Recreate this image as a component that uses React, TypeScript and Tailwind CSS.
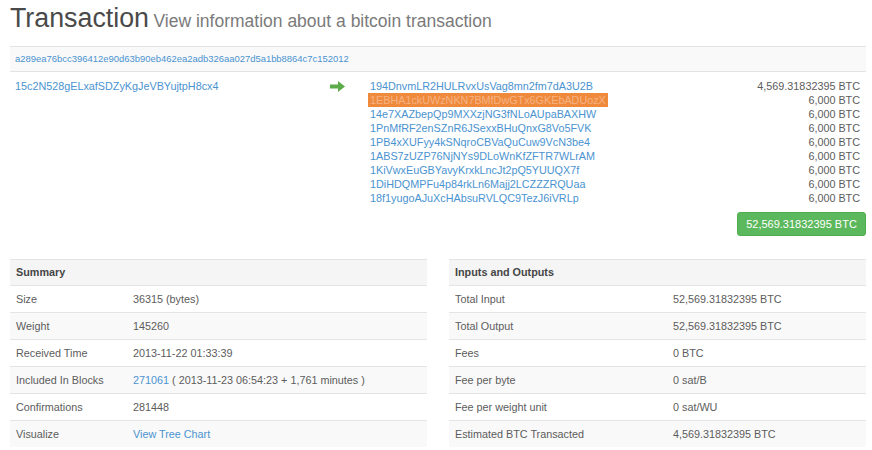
import React from "react";

const outputs: [string, string][] = [
  ["194DnvmLR2HULRvxUsVag8mn2fm7dA3U2B", "4,569.31832395 BTC"],
  ["1EBHA1ckUWzNKN7BMfDwGTx6GKEbADUozX", "6,000 BTC"],
  ["14e7XAZbepQp9MXXzjNG3fNLoAUpaBAXHW", "6,000 BTC"],
  ["1PnMfRF2enSZnR6JSexxBHuQnxG8Vo5FVK", "6,000 BTC"],
  ["1PB4xXUFyy4kSNqroCBVaQuCuw9VcN3be4", "6,000 BTC"],
  ["1ABS7zUZP76NjNYs9DLoWnKfZFTR7WLrAM", "6,000 BTC"],
  ["1KiVwxEuGBYavyKrxkLncJt2pQ5YUUQX7f", "6,000 BTC"],
  ["1DiHDQMPFu4p84rkLn6Majj2LCZZZRQUaa", "6,000 BTC"],
  ["18f1yugoAJuXcHAbsuRVLQC9TezJ6iVRLp", "6,000 BTC"],
];

type Row = { label: string; value: React.ReactNode };

const summary: Row[] = [
  { label: "Size", value: "36315 (bytes)" },
  { label: "Weight", value: "145260" },
  { label: "Received Time", value: "2013-11-22 01:33:39" },
  {
    label: "Included In Blocks",
    value: (
      <span>
        <span className="text-[#4a93d0]">271061</span> ( 2013-11-23 06:54:23 + 1,761 minutes )
      </span>
    ),
  },
  { label: "Confirmations", value: "281448" },
  { label: "Visualize", value: <span className="text-[#4a93d0]">View Tree Chart</span> },
];

const io: Row[] = [
  { label: "Total Input", value: "52,569.31832395 BTC" },
  { label: "Total Output", value: "52,569.31832395 BTC" },
  { label: "Fees", value: "0 BTC" },
  { label: "Fee per byte", value: "0 sat/B" },
  { label: "Fee per weight unit", value: "0 sat/WU" },
  { label: "Estimated BTC Transacted", value: "4,569.31832395 BTC" },
];

function Table({ title, rows, cols }: { title: string; rows: Row[]; cols: string }) {
  return (
    <div className="w-[417px] text-[10.8px] text-[#5c5c5c]">
      <div className="h-[26px] flex items-center px-[6px] bg-[#f5f5f5] border-t border-[#e4e4e4] font-bold text-[#454545]">
        {title}
      </div>
      {rows.map((r, i) => (
        <div
          key={r.label}
          className={`grid ${cols} h-[27px] items-center border-t border-[#e4e4e4] ${i % 2 === 1 ? "bg-[#f9f9f9]" : "bg-white"}`}
        >
          <div className="px-[6px]">{r.label}</div>
          <div className="px-[6px]">{r.value}</div>
        </div>
      ))}
    </div>
  );
}

export default function App() {
  return (
    <div className="w-[872px] h-[450px] overflow-hidden bg-white pl-[10px] pr-[6px] font-['Liberation_Sans',Arial,sans-serif]">
      <div className="h-[46px] pt-[5px]">
        <h1 className="leading-none whitespace-nowrap">
          <span className="text-[26.8px] text-[#4a4a4a]">Transaction</span>{" "}
          <span className="text-[17.5px] text-[#7a7a7a]">View information about a bitcoin transaction</span>
        </h1>
      </div>
      <div className="h-[26px] flex items-center px-[5px] bg-[#f9f9f9] border-y border-[#e3e3e3] text-[9.45px] text-[#4a93d0]">
        a289ea76bcc396412e90d63b90eb462ea2adb326aa027d5a1bb8864c7c152012
      </div>
      <div className="flex pt-[7px] text-[10.8px] leading-[14px]">
        <div className="w-[318px] pl-[5px] text-[#4a93d0]">15c2N528gELxafSDZyKgJeVBYujtpH8cx4</div>
        <div className="w-[40px] pl-[2px] pt-[2px]">
          <svg width="15" height="11" viewBox="0 0 15 11">
            <path d="M0 3.5 H8 V0 L15 5.5 L8 11 V7.5 H0 Z" fill="#5cab4a" />
          </svg>
        </div>
        <div className="flex-1 flex flex-col">
          {outputs.map(([addr, amt], i) => (
            <div key={addr} className="flex justify-between pr-[6px] h-[14px]">
              <span
                className={
                  i === 1
                    ? "px-[2px] bg-[#ef8a3c] text-[#f6b283]"
                    : "px-[2px] text-[#4a93d0]"
                }
              >
                {addr}
              </span>
              <span className="text-[#5c5c5c]">{amt}</span>
            </div>
          ))}
          <div className="flex justify-end pt-[7px]">
            <div className="w-[129px] h-[24px] flex items-center justify-center rounded-[3px] bg-[#5cb85c] border border-[#4cae4c] text-white text-[11px]">
              52,569.31832395 BTC
            </div>
          </div>
        </div>
      </div>
      <div className="flex justify-between mt-[23px]">
        <Table title="Summary" rows={summary} cols="grid-cols-[117px_1fr]" />
        <Table title="Inputs and Outputs" rows={io} cols="grid-cols-[218px_1fr]" />
      </div>
    </div>
  );
}
